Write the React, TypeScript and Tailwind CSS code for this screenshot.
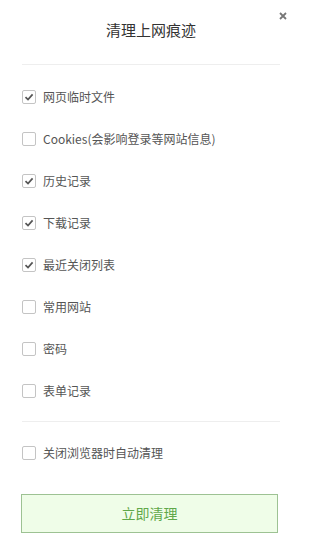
import React, { useState } from 'react';

const initial = [
    { label: '网页临时文件', checked: true },
    { label: 'Cookies(会影响登录等网站信息)', checked: false },
    { label: '历史记录', checked: true },
    { label: '下载记录', checked: true },
    { label: '最近关闭列表', checked: true },
    { label: '常用网站', checked: false },
    { label: '密码', checked: false },
    { label: '表单记录', checked: false },
];

function Check({ checked, label, onToggle }: { checked: boolean; label: string; onToggle: () => void }) {
    return (
        <button type="button" onClick={onToggle} className="flex items-center h-[42px] text-left">
            <span className="w-[14px] h-[14px] border border-[#c4c4c4] rounded-[2px] bg-white flex items-center justify-center shrink-0">
                {checked && (
                    <svg width="10" height="10" viewBox="0 0 10 10">
                        <path d="M1.5 5.2 L4 7.6 L8.6 2.4" fill="none" stroke="#555" strokeWidth="1.7" />
                    </svg>
                )}
            </span>
            <span className="ml-[7px] text-[12px] text-[#555]">{label}</span>
        </button>
    );
}

export default function App() {
    const [items, setItems] = useState(initial);
    const [autoClear, setAutoClear] = useState(false);

    const toggle = (i: number) =>
        setItems(items.map((it, idx) => (idx === i ? { ...it, checked: !it.checked } : it)));

    return (
        <div
            className="relative w-[302px] h-[556px] bg-white px-[21px]"
            style={{ fontFamily: '"Microsoft YaHei", "Noto Sans CJK SC", sans-serif' }}
        >
            {/* Close */}
            <button type="button" className="absolute right-[14px] top-[11px] p-[1px]">
                <svg width="8" height="8" viewBox="0 0 8 8">
                    <path d="M1 1 L7 7 M7 1 L1 7" stroke="#777" strokeWidth="1.8" />
                </svg>
            </button>

            {/* Header */}
            <div className="h-[65px] flex items-center justify-center border-b border-[#eeeeee] mx-[1px]">
                <h1 className="text-[15px] text-[#333] -mt-[4px]">清理上网痕迹</h1>
            </div>

            {/* Options */}
            <div className="flex flex-col pt-[11px] pb-[9px] border-b border-[#eeeeee] mx-[1px]">
                {items.map((it, i) => (
                    <Check key={it.label} label={it.label} checked={it.checked} onToggle={() => toggle(i)} />
                ))}
            </div>

            <div className="flex flex-col pt-[10px] mx-[1px]">
                <Check label="关闭浏览器时自动清理" checked={autoClear} onToggle={() => setAutoClear(!autoClear)} />
            </div>

            <button
                type="button"
                className="mt-[20px] w-[257px] h-[39px] border border-[#9dc293] bg-[#effde8] text-[#5fa84a] text-[14px] flex items-center justify-center"
            >
                立即清理
            </button>
        </div>
    );
}
